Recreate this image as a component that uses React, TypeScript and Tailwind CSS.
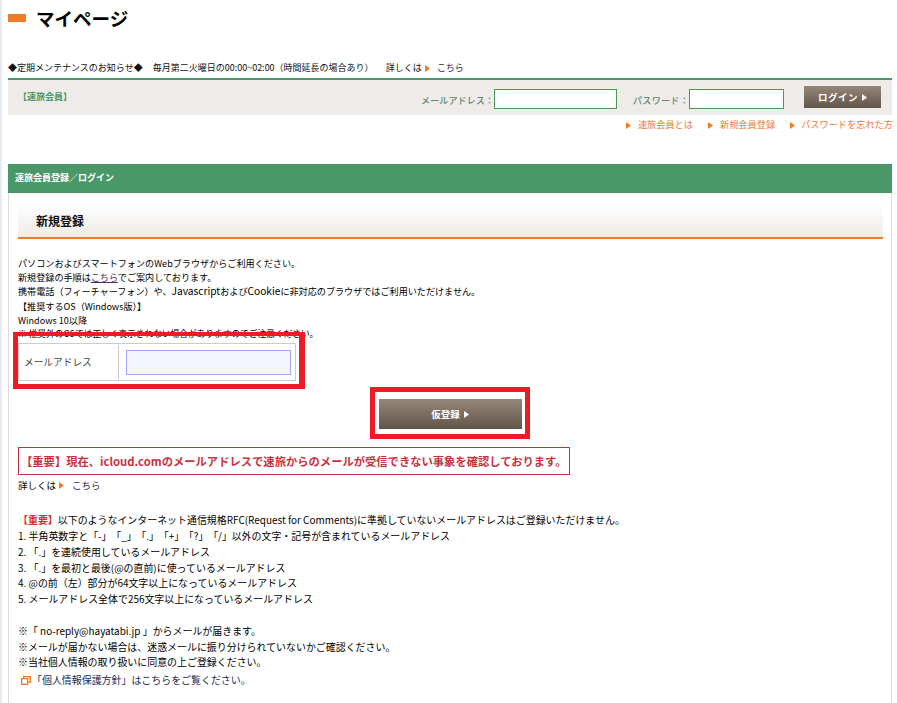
const jp = "font-['Noto_Sans_CJK_JP','Noto_Sans',sans-serif]";

function Arrow({ className = "" }: { className?: string }) {
  return (
    <svg width="5" height="7" viewBox="0 0 5 7" className={`inline-block ${className}`}>
      <path d="M0 0 L5 3.5 L0 7 Z" fill="currentColor" />
    </svg>
  );
}

export default function App() {
  return (
    <div className={`${jp} relative h-[703px] w-[897px] overflow-hidden border-l-2 border-[#e4e9f2] bg-white pl-[6px] pr-[5px] text-[#111]`}>
      <div className="flex h-[36px] items-center">
        <div className="h-[8px] w-[18px] bg-[#f07a26]" />
        <h1 className="ml-[10px] text-[18.5px] font-bold leading-none text-black">マイページ</h1>
      </div>

      <div className="mt-[23px] flex h-[18px] items-center whitespace-nowrap text-[9px] text-[#111]">
        <span>◆定期メンテナンスのお知らせ◆</span>
        <span className="ml-[10px]">毎月第二火曜日の00:00~02:00（時間延長の場合あり）</span>
        <span className="ml-[12px]">詳しくは</span>
        <Arrow className="ml-[3px] text-[#f07a26]" />
        <span className="ml-[7px] text-[#1a2a55]">こちら</span>
      </div>

      <div className="mt-[1px] flex h-[37px] items-start border-t-2 border-[#4a9868] bg-[#eeebe8]">
        <span className="ml-[10px] mt-[10px] text-[9px] font-bold text-[#4a9868]">【速旅会員】</span>
        <div className="ml-auto flex items-start">
          <span className="mt-[14px] text-[9px] font-medium tracking-[0.12px] text-[#5f8a76]">メールアドレス：</span>
          <div className="mt-[9px] h-[20px] w-[123px] border border-[#4a9a50] bg-white" />
          <span className="ml-[16px] mt-[14px] text-[9px] font-medium tracking-[0.33px] text-[#5f8a76]">パスワード：</span>
          <div className="mt-[9px] h-[20px] w-[95px] border border-[#4a9a50] bg-white" />
          <div className="ml-[20px] mr-[11px] mt-[6px] flex h-[22px] w-[77px] items-center justify-center gap-[4px] bg-gradient-to-b from-[#958779] to-[#62554a] text-[9.5px] font-bold tracking-[0.5px] text-white">
            ログイン<Arrow />
          </div>
        </div>
      </div>

      <div className="-mr-[1px] flex h-[20px] items-center justify-end whitespace-nowrap text-[9.2px] text-[#f07a36]">
        <Arrow className="text-[#f07a26]" />
        <span className="ml-[7px]">速旅会員とは</span>
        <Arrow className="ml-[15px] text-[#f07a26]" />
        <span className="ml-[7px]">新規会員登録</span>
        <Arrow className="ml-[15px] text-[#f07a26]" />
        <span className="ml-[6px]">パスワードを忘れた方</span>
      </div>

      <div className="mt-[29px] flex h-[29px] items-center bg-[#4a9868] pb-px pl-[7px] text-[9px] font-bold text-white">
        速旅会員登録／ログイン
      </div>

      <div className="h-[520px] border-x border-[#dcdcdc] px-[9px] pt-[10px]">
        <div className="flex h-[36px] w-[865px] items-center border-b-2 border-[#f07a26] bg-gradient-to-b from-white to-[#eeebe8] pl-[18px] pt-px text-[12px] font-bold text-[#111]">
          新規登録
        </div>

        <div className="mt-[17px] whitespace-nowrap text-[9.1px] leading-[14.2px] text-black">
          <p>パソコンおよびスマートフォンのWebブラウザからご利用ください。</p>
          <p>新規登録の手順は<span className="text-[#4b2a6b] underline">こちら</span>でご案内しております。</p>
          <p>携帯電話（フィーチャーフォン）や、<span className="text-[10.2px]">Javascript</span>および<span className="text-[10.2px]">Cookie</span>に非対応のブラウザではご利用いただけません。</p>
          <p>【推奨するOS（Windows版）】</p>
          <p>Windows 10以降</p>
          <p className="text-[8.7px]">※ 推奨外のOSでは正しく表示されない場合がありますのでご注意ください。</p>
        </div>

        <div className="relative mt-[2px] flex h-[38px] w-[278px] border border-[#cccccc] bg-white p-px">
          <div className="flex w-[99px] items-center border-r border-[#cccccc] pl-[4px] text-[9.7px] text-[#444]">メールアドレス</div>
          <div className="flex flex-1 items-center pl-[7px]">
            <div className="h-[25px] w-[165px] border border-[#a5a5ff] bg-[#f5f5ff]" />
          </div>
          <div className="absolute -bottom-[9px] -left-[6px] -right-[10px] -top-[12px] border-b-[5px] border-l-[5px] border-r-[6px] border-t-[4px] border-[#ed1c24]" />
        </div>

        <div className="relative mx-auto mt-[18px] flex h-[30px] w-[143px] items-center justify-center gap-[4px] bg-gradient-to-b from-[#958779] to-[#62554a] text-[9.5px] font-bold text-white">
          仮登録<Arrow />
          <div className="absolute -bottom-[10px] -left-[9px] -right-[8px] -top-[12px] border-[5px] border-[#ed1c24]" />
        </div>

        <div className="mt-[18px] flex h-[28px] w-[552px] items-center whitespace-nowrap border border-[#c8323f] pl-[2px] text-[11.3px] font-bold text-[#c8323f]">
          【重要】現在、icloud.comのメールアドレスで速旅からのメールが受信できない事象を確認しております。
        </div>

        <div className="mt-[3px] flex h-[14px] items-center whitespace-nowrap text-[9.5px] text-black">
          <span>詳しくは</span>
          <Arrow className="ml-[3px] text-[#f07a26]" />
          <span className="ml-[8px] text-[#1a2a55]">こちら</span>
        </div>

        <div className="mt-[20px] whitespace-nowrap text-[9.95px] leading-[15.8px] text-black">
          <p><span className="font-bold text-[#e02a2a]">【重要】</span>以下のようなインターネット通信規格RFC(Request for Comments)に準拠していないメールアドレスはご登録いただけません。</p>
          <p>1. 半角英数字と<span className="[word-spacing:-2.5px]">「-」 「_」 「.」 「+」 「?」 「/」 </span>以外の文字・記号が含まれているメールアドレス</p>
          <p>2. 「.」を連続使用しているメールアドレス</p>
          <p>3. 「.」を最初と最後(@の直前)に使っているメールアドレス</p>
          <p>4. @の前（左）部分が64文字以上になっているメールアドレス</p>
          <p>5. メールアドレス全体で256文字以上になっているメールアドレス</p>
          <p className="mt-[15.8px]">※「 no-reply@hayatabi.jp 」からメールが届きます。</p>
          <p>※メールが届かない場合は、迷惑メールに振り分けられていないかご確認ください。</p>
          <p>※当社個人情報の取り扱いに同意の上ご登録ください。</p>
          <p className="mt-[2px] flex items-center text-[#1a2a55]">
            <svg width="10" height="9" viewBox="0 0 10 9" className="ml-[3px] mr-[1px]" fill="none" stroke="#f07a26" strokeWidth="1.3">
              <rect x="0.65" y="2.65" width="6" height="5.7" />
              <path d="M2.65 2.65 V0.65 H9.35 V6.2 H6.65" />
            </svg>
            「個人情報保護方針」はこちらをご覧ください。
          </p>
        </div>
      </div>
    </div>
  );
}
